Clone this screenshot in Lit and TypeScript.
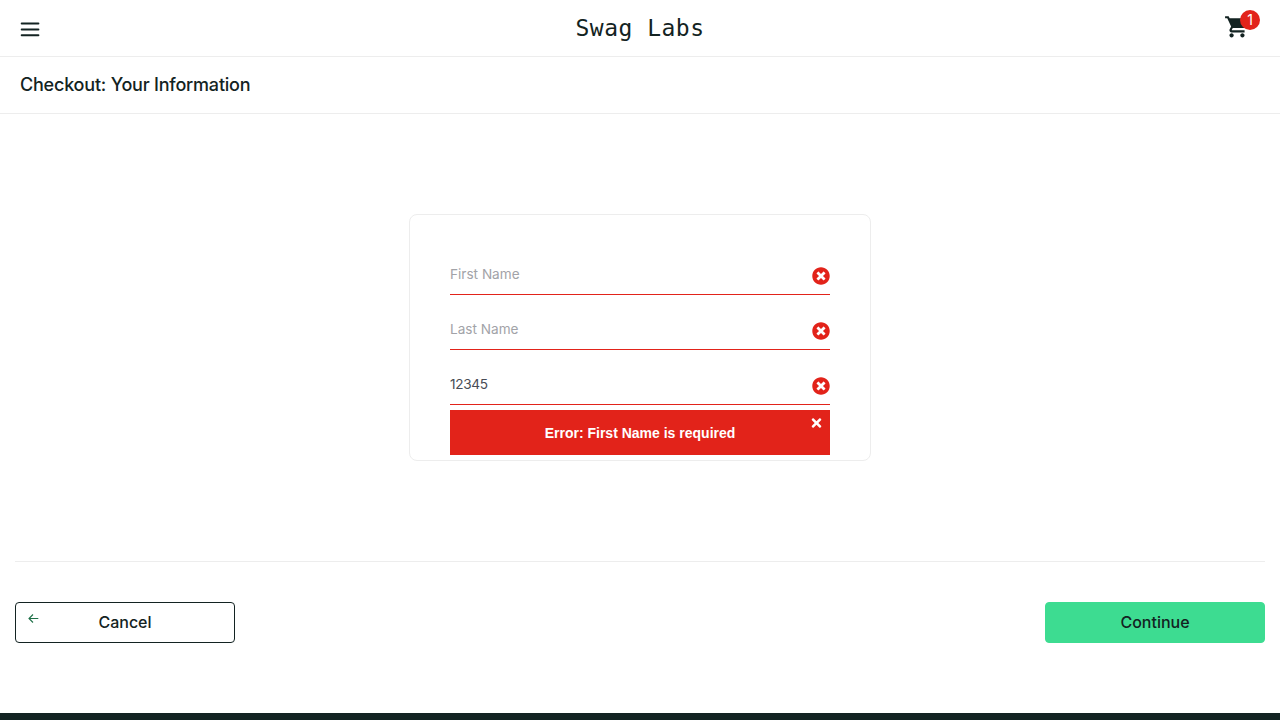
import { LitElement, html, css } from "lit";
import { customElement } from "lit/decorators.js";

const timesCircle = html`<svg class="invalid" viewBox="0 0 512 512"><path d="M256 8C119 8 8 119 8 256s111 248 248 248 248-111 248-248S393 8 256 8zm121.6 313.1c4.7 4.7 4.7 12.3 0 17L338 377.6c-4.7 4.7-12.3 4.7-17 0L256 312l-65.1 65.6c-4.7 4.7-12.3 4.7-17 0L134.4 338c-4.7-4.7-4.7-12.3 0-17l65.6-65-65.6-65.1c-4.7-4.7-4.7-12.3 0-17l39.6-39.6c4.7-4.7 12.3-4.7 17 0l65 65.7 65.1-65.6c4.7-4.7 12.3-4.7 17 0l39.6 39.6c4.7 4.7 4.7 12.3 0 17L312 256l65.6 65.1z"/></svg>`;

@customElement("app-root")
export class AppRoot extends LitElement {
  static styles = css`
    :host {
      display: flex;
      flex-direction: column;
      height: 720px;
      overflow: hidden;
      background: #fff;
      color: #132322;
      font-family: Inter, "Liberation Sans", sans-serif;
    }
    * { box-sizing: border-box; }
    svg { display: block; flex: none; }
    .header {
      display: grid;
      grid-template-columns: 1fr auto 1fr;
      align-items: center;
      height: 57px;
      padding: 0 20px;
      border-bottom: 1px solid #ededed;
    }
    .menu { margin-top: 3px; }
    .logo {
      font: 23px/32px "DejaVu Sans Mono", monospace;
      letter-spacing: 0.5px;
      white-space: nowrap;
    }
    .cart {
      position: relative;
      justify-self: end;
      width: 36px;
      height: 26px;
      margin-top: -2px;
    }
    .badge {
      position: absolute;
      top: -4px;
      right: 0;
      width: 20px;
      height: 20px;
      border-radius: 50%;
      background: #e2231a;
      color: #fff;
      font-size: 14px;
      line-height: 20px;
      text-align: center;
    }
    .subheader {
      display: flex;
      align-items: center;
      height: 57px;
      padding: 0 20px 2px;
      border-bottom: 1px solid #ededed;
    }
    .title { font-size: 18px; font-weight: 500; letter-spacing: -0.21px; }
    .content {
      display: flex;
      flex-direction: column;
      align-items: center;
      height: 599px;
      padding: 100px 15px 0;
    }
    .card {
      width: 462px;
      height: 247px;
      flex: none;
      padding: 40px 40px 0;
      border: 1px solid #ededed;
      border-radius: 8px;
    }
    .field {
      display: flex;
      align-items: flex-start;
      justify-content: space-between;
      height: 40px;
      margin-bottom: 15px;
      padding-top: 9px;
      border-bottom: 1px solid #e2231a;
      font-size: 13.6px;
      line-height: 20px;
      color: #484c55;
    }
    .field.last { margin-bottom: 5px; }
    .value { letter-spacing: -0.3px; }
    .hint { color: #a2a3a8; }
    .invalid { width: 18px; height: 18px; margin-top: 3px; fill: #e2231a; }
    .error {
      display: grid;
      grid-template-columns: 30px 1fr 30px;
      align-items: center;
      height: 45px;
      background: #e2231a;
      color: #fff;
      font: bold 14px/20px "Liberation Sans", sans-serif;
      text-align: center;
    }
    .message { grid-column: 2; padding-top: 1px; }
    .close { align-self: start; margin: 6px 0 0 11px; fill: #fff; }
    .actions {
      display: flex;
      justify-content: space-between;
      width: 100%;
      margin-top: 100px;
      padding-top: 40px;
      border-top: 1px solid #ededed;
    }
    .button {
      display: grid;
      grid-template-columns: 30px 1fr 30px;
      width: 220px;
      height: 41px;
      padding: 0;
      border: 1px solid #132322;
      border-radius: 4px;
      background: #fff;
      color: #132322;
      font: 500 16px/39px Inter, sans-serif;
      text-align: center;
    }
    .button.primary { border-color: #3ddc91; background: #3ddc91; }
    .caption { grid-column: 2; }
    .back { margin: 10px 0 0 12px; }
    .footer { flex: 1; background: #132322; }
  `;

  render() {
    return html`
      <div class="header">
        <svg class="menu" width="20" height="15" viewBox="0 0 20 15">
          <path d="M1.7 1.6H18.4M1.7 7.5H18.4M1.7 13.3H18.4" stroke="#132322" stroke-width="2" stroke-linecap="round" />
        </svg>
        <div class="logo">Swag Labs</div>
        <div class="cart">
          <svg width="26" height="26" viewBox="0 0 24 24" fill="#132322"><path d="M7 17.7c-1.1 0-1.99.9-1.99 2S5.9 21.7 7 21.7s2-.9 2-2-.9-2-2-2zM1 2v2h2l3.6 7.59-1.35 2.45c-.16.28-.25.61-.25.96 0 1.1.9 2 2 2h12v-2H7.42c-.14 0-.25-.11-.25-.25l.03-.12.9-1.63H19.3V4H5.21l-.94-2H1zm16 15.7c-1.1 0-1.99.9-1.99 2s.89 2 1.99 2 2-.9 2-2-.9-2-2-2z"/></svg>
          <span class="badge">1</span>
        </div>
      </div>
      <div class="subheader"><span class="title">Checkout: Your Information</span></div>
      <div class="content">
        <div class="card">
          <div class="field"><span class="hint">First Name</span>${timesCircle}</div>
          <div class="field"><span class="hint">Last Name</span>${timesCircle}</div>
          <div class="field last"><span class="value">12345</span>${timesCircle}</div>
          <div class="error">
            <span class="message">Error: First Name is required</span>
            <svg class="close" width="11" height="14" viewBox="0 0 352 512"><path d="M242.72 256l100.07-100.07c12.28-12.28 12.28-32.19 0-44.48l-22.24-22.24c-12.28-12.28-32.19-12.28-44.48 0L176 189.28 75.93 89.21c-12.28-12.28-32.19-12.28-44.48 0L9.21 111.45c-12.28 12.28-12.28 32.19 0 44.48L109.28 256 9.21 356.07c-12.28 12.28-12.28 32.19 0 44.48l22.24 22.24c12.28 12.28 32.2 12.28 44.48 0L176 322.72l100.07 100.07c12.28 12.28 32.2 12.28 44.48 0l22.24-22.24c12.28-12.28 12.28-32.19 0-44.48L242.72 256z"/></svg>
          </div>
        </div>
        <div class="actions">
          <button class="button">
            <svg class="back" width="11" height="10" viewBox="0 0 11 10"><path d="M5 1.5L1 5.5L5 9.5M1.2 5.5H10.3" fill="none" stroke="#1f7048" stroke-width="1.1" /></svg>
            <span class="caption">Cancel</span>
          </button>
          <button class="button primary"><span class="caption">Continue</span></button>
        </div>
      </div>
      <div class="footer"></div>
    `;
  }
}
